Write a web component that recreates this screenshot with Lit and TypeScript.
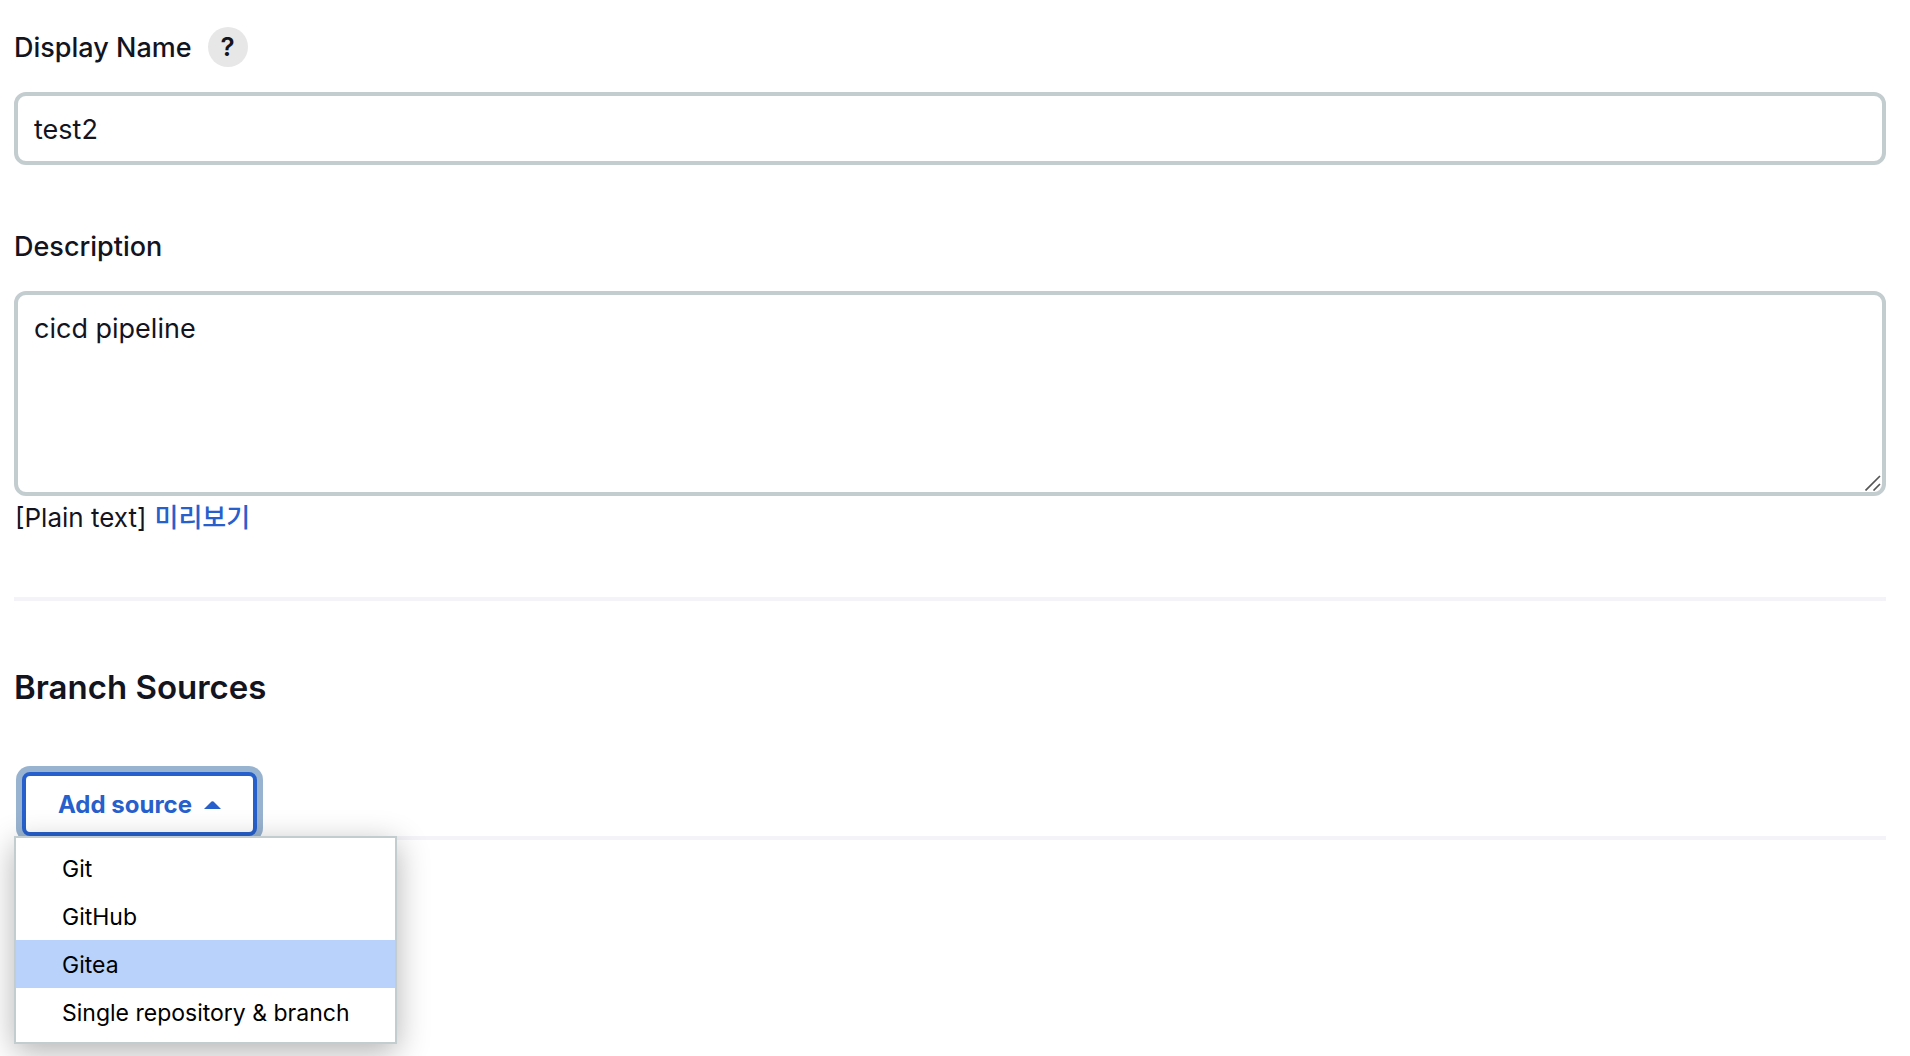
import { LitElement, html, css } from "lit";
import { customElement, state } from "lit/decorators.js";
import { classMap } from "lit/directives/class-map.js";

const SOURCES = ["Git", "GitHub", "Gitea", "Single repository & branch"];

@customElement("app-root")
export class AppRoot extends LitElement {
  @state() private open = true;
  @state() private active = "Gitea";

  static styles = css`
    :host {
      display: block;
      box-sizing: border-box;
      min-height: 100vh;
      padding: 27px 24px 12px 14px;
      background: #fff;
      color: #14141f;
      font-family: Inter, "Noto Sans CJK KR", sans-serif;
      font-size: 27px;
      line-height: 40px;
    }
    *,
    *::before {
      box-sizing: border-box;
    }
    .field {
      display: flex;
      flex-direction: column;
      margin-bottom: 61px;
    }
    .field.last {
      margin-bottom: 0;
    }
    .label-row {
      display: flex;
      align-items: center;
      gap: 16px;
      height: 40px;
      margin-bottom: 25px;
    }
    .label {
      padding-top: 2px;
      font-weight: 500;
    }
    .help {
      display: grid;
      place-items: center;
      width: 40px;
      height: 40px;
      padding: 0;
      border: 0;
      border-radius: 50%;
      background: #e7e7e7;
      color: #14141f;
      font: 600 26px/40px Inter, sans-serif;
    }
    .control {
      display: block;
      width: 100%;
      margin: 0;
      padding: 14px 16px 12px;
      border: 4px solid #c3cccf;
      border-radius: 12px;
      background: #fff;
      color: #14141f;
      font: inherit;
      outline: none;
    }
    .input {
      height: 73px;
    }
    .area-wrap {
      position: relative;
    }
    .area {
      height: 205px;
      resize: none;
    }
    .grip {
      position: absolute;
      right: 5px;
      bottom: 5px;
      width: 16px;
      height: 16px;
      pointer-events: none;
    }
    .format {
      display: flex;
      gap: 8px;
      padding: 2px 0 0 1px;
      font-size: 26px;
    }
    .preview {
      color: #2760cc;
      font-weight: 500;
      text-decoration: none;
    }
    .rule {
      height: 4px;
      margin: 0;
      border: 0;
      background: #f3f3f8;
    }
    .rule.first {
      margin-top: 59px;
    }
    .title {
      margin: 64px 0 63px;
      font-size: 33px;
      font-weight: 600;
      line-height: 44px;
    }
    .picker {
      position: relative;
      width: fit-content;
      padding-left: 8px;
    }
    .add {
      display: flex;
      align-items: center;
      gap: 12px;
      height: 64px;
      padding: 1px 32px 0;
      border: 4px solid #2760cc;
      border-radius: 8px;
      background: #fff;
      box-shadow: 0 0 0 6px #98b3d0;
      color: #2760cc;
      font: 700 24px/32px Inter, sans-serif;
      outline: none;
    }
    .caret {
      width: 17px;
      height: 8px;
    }
    .menu {
      position: absolute;
      z-index: 1;
      top: 100%;
      left: 0;
      width: max-content;
      margin: 0;
      padding: 6px 0;
      border: 2px solid #c3cccf;
      background: #fff;
      box-shadow: 0 8px 30px rgba(0, 0, 0, 0.3);
      list-style: none;
    }
    .item {
      display: block;
      width: 100%;
      height: 48px;
      padding: 2px 45px 0 46px;
      border: 0;
      background: transparent;
      color: #000;
      font: 400 23px/46px Inter, sans-serif;
      text-align: left;
      white-space: nowrap;
    }
    .item.active {
      background: #b9d2fb;
    }
  `;

  render() {
    return html`
      <div class="field">
        <div class="label-row">
          <label class="label" for="display-name">Display Name</label>
          <button class="help" type="button">?</button>
        </div>
        <input id="display-name" class="control input" type="text" value="test2" />
      </div>

      <div class="field last">
        <div class="label-row">
          <label class="label" for="description">Description</label>
        </div>
        <div class="area-wrap">
          <textarea id="description" class="control area" spellcheck="false" .value=${"cicd pipeline"}></textarea>
          <svg class="grip" viewBox="0 0 16 16" aria-hidden="true">
            <path d="M.5 15.500 15 1M8.500 15.500 15 9" fill="none" stroke="#555" stroke-width="1.7" />
          </svg>
        </div>
        <div class="format">
          <span>[Plain text]</span>
          <a class="preview" href="#preview">미리보기</a>
        </div>
      </div>

      <hr class="rule first" />
      <h2 class="title">Branch Sources</h2>

      <div class="picker">
        <button
          class="add"
          type="button"
          aria-haspopup="menu"
          aria-expanded=${this.open ? "true" : "false"}
          @click=${() => (this.open = !this.open)}
        >
          Add source
          <svg class="caret" viewBox="0 0 17 8" aria-hidden="true">
            <path d="M0 8 7.5.6Q8.500 0 9.500.6L17 8Z" fill="currentColor" />
          </svg>
        </button>
        ${this.open
          ? html`<ul class="menu" role="menu">
              ${SOURCES.map(
                (name) => html`<li role="none">
                  <button
                    type="button"
                    role="menuitem"
                    class=${classMap({ item: true, active: name === this.active })}
                    @mouseenter=${() => (this.active = name)}
                  >
                    ${name}
                  </button>
                </li>`
              )}
            </ul>`
          : null}
      </div>
      <hr class="rule" />
    `;
  }
}
